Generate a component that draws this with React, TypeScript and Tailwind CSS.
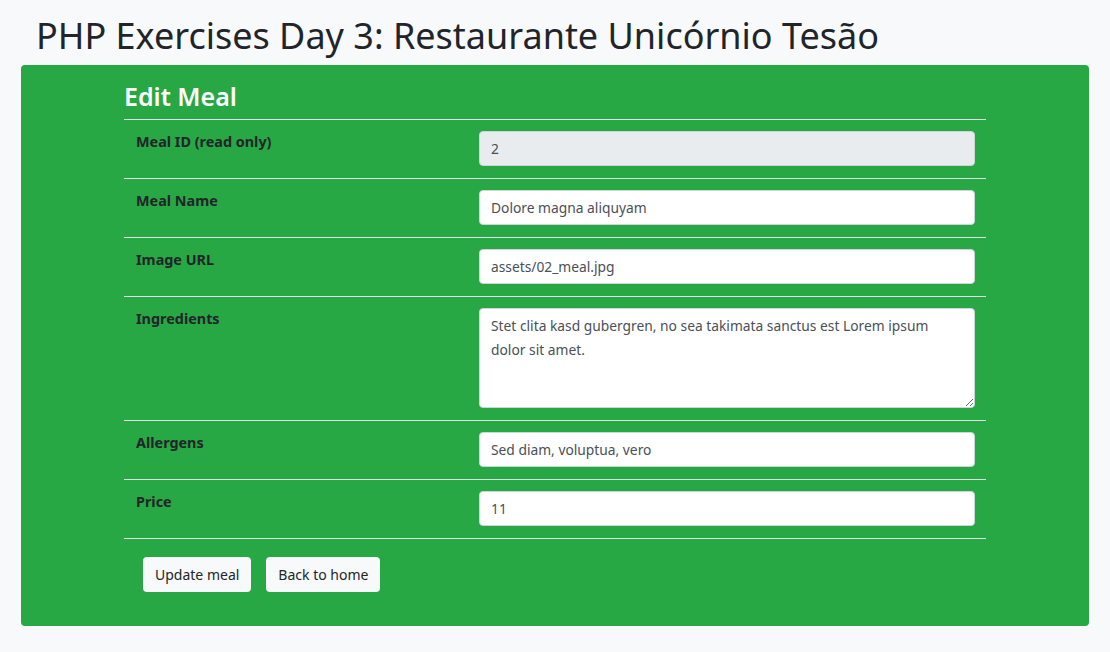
import React from 'react';

const FIELDS = [
  { label: 'Meal ID (read only)', value: '2', readOnly: true },
  { label: 'Meal Name', value: 'Dolore magna aliquyam' },
  { label: 'Image URL', value: 'assets/02_meal.jpg' },
  { label: 'Ingredients', value: 'Stet clita kasd gubergren, no sea takimata sanctus est Lorem ipsum dolor sit amet.', multiline: true },
  { label: 'Allergens', value: 'Sed diam, voluptua, vero' },
  { label: 'Price', value: '11' },
];

const inputBase =
  'w-full rounded-[4px] border border-[#ced4da] px-[11px] text-[13.8px] text-[#495057] outline-none';

export default function App() {
  return (
    <div className="min-h-screen bg-[#f8f9fa] pb-[26px] font-['Noto_Sans',sans-serif] text-[#212529]">
      <h1 className="px-[36px] pt-[14px] pb-[8px] text-[36px] leading-[43px] font-normal">
        PHP Exercises Day 3: Restaurante Unicórnio Tesão
      </h1>

      <div className="mx-[21px] rounded-[4px] bg-[#28a745] pb-[34px]">
        <div className="mx-auto w-[862px]">
          <h3 className="pt-[16px] pb-[8px] text-[25px] leading-[30px] font-semibold text-white">Edit Meal</h3>

          <div className="border-b border-[#dee2e6]">
            {FIELDS.map((f) => (
              <div key={f.label} className="flex border-t border-[#dee2e6]">
                <div className="w-[343px] px-[12px] pt-[10px] text-[14.4px] leading-[24px] font-bold">{f.label}</div>
                <div className="flex-1 pl-[12px] pr-[11px] pt-[11px] pb-[12px]">
                  {f.multiline ? (
                    <textarea
                      readOnly
                      defaultValue={f.value}
                      className={`${inputBase} block h-[100px] resize-y bg-white py-[5px] pr-[20px] leading-[24px]`}
                    />
                  ) : (
                    <input
                      readOnly
                      defaultValue={f.value}
                      className={`${inputBase} block h-[35px] ${f.readOnly ? 'bg-[#e9ecef]' : 'bg-white'}`}
                    />
                  )}
                </div>
              </div>
            ))}
          </div>

          <div className="flex gap-[15px] pt-[18px] pl-[19px]">
            <button className="h-[35px] rounded-[4px] bg-[#f8f9fa] px-[12px] text-[14px] text-[#212529]">Update meal</button>
            <button className="h-[35px] rounded-[4px] bg-[#f8f9fa] px-[12px] text-[14px] text-[#212529]">Back to home</button>
          </div>
        </div>
      </div>
    </div>
  );
}
